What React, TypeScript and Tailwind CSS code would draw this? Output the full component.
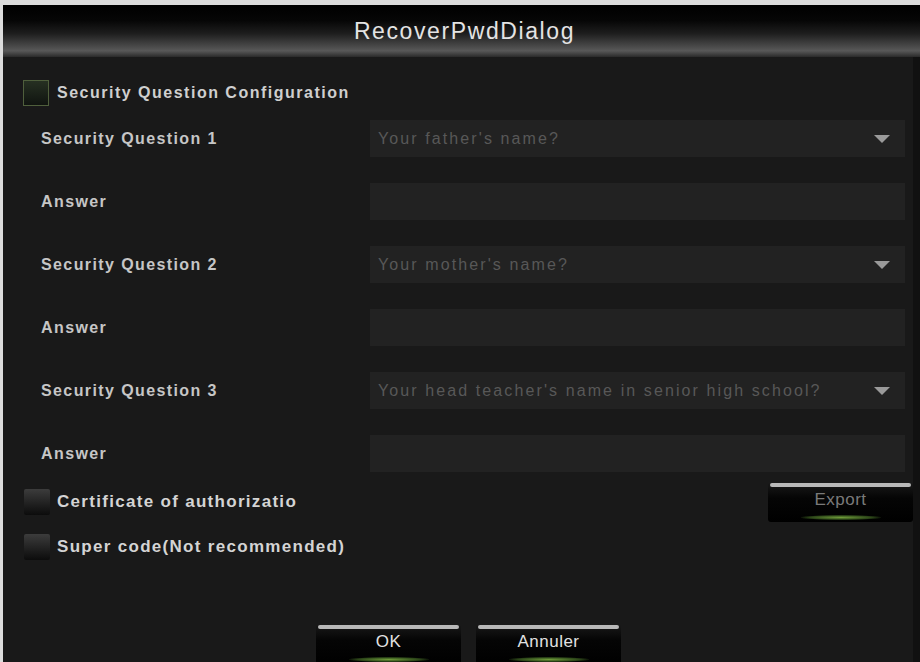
import type { ReactNode } from 'react'

const ROWS = [
  { label: 'Security Question 1', kind: 'select', value: "Your father's name?" },
  { label: 'Answer', kind: 'input' },
  { label: 'Security Question 2', kind: 'select', value: "Your mother's name?" },
  { label: 'Answer', kind: 'input' },
  { label: 'Security Question 3', kind: 'select', value: "Your head teacher's name in senior high school?" },
  { label: 'Answer', kind: 'input' },
] as const

function CheckBox({ active }: { active?: boolean }) {
  return active ? (
    <span className="block h-[26px] w-[26px] shrink-0 border border-[#4f5f3c] bg-[linear-gradient(to_bottom,#263022,#101410)]" />
  ) : (
    <span className="block h-[26px] w-[26px] shrink-0 rounded-[2px] bg-[linear-gradient(to_bottom,#3c3c3c,#1a1a1a_70%,#0c0c0c)]" />
  )
}

function DvrButton({ children, dim }: { children: ReactNode; dim?: boolean }) {
  return (
    <button
      className={
        'relative flex h-[40px] w-[145px] flex-col overflow-hidden rounded-[3px] bg-[linear-gradient(to_bottom,#1a1a1a,#050505_40%,#000)] ' +
        (dim ? 'text-[#7a7a7a]' : 'text-[#e2e2e2]')
      }
    >
      <span className="mx-[2px] mt-[1px] block h-[4px] rounded-full bg-[#b8b8b8]" />
      <span className="flex h-[25px] items-center justify-center text-[17px] tracking-[0.5px]">{children}</span>
      <span className="absolute bottom-[2px] left-1/2 h-[5px] w-[80px] -translate-x-1/2 rounded-full bg-[radial-gradient(ellipse_at_center,#6f9c3a_0%,#2b4418_55%,transparent_75%)]" />
    </button>
  )
}

export default function App() {
  return (
    <div className="h-[662px] w-[920px] overflow-hidden bg-[#dcdcdc] pl-[3px] pt-[5px] font-['Liberation_Sans',Arial,sans-serif]">
      <div className="flex h-full flex-col bg-[#191919]">
        {/* Title bar */}
        <div className="flex h-[52px] shrink-0 items-center justify-center bg-[linear-gradient(to_bottom,#000_0%,#060606_30%,#1e1e1e_55%,#4a4a4a_80%,#585858_88%,#2a2a2a_100%)]">
          <span className="pl-[6px] text-[23px] tracking-[1.6px] text-[#e4e4e4]">RecoverPwdDialog</span>
        </div>

        <div className="flex flex-1 flex-col border-r-[7px] border-[#111]">
          {/* Security question toggle */}
          <label className="ml-[20px] mt-[23px] flex h-[26px] items-center gap-[8px]">
            <CheckBox active />
            <span className="text-[16px] font-bold tracking-[1.5px] text-[#cfcfcf]">Security Question Configuration</span>
          </label>

          {/* Questions */}
          <div className="mt-[14px] grid grid-cols-[329px_535px] gap-y-[26px] pl-[38px]">
            {ROWS.map((row, i) => (
              <div key={i} className="contents">
                <span className="flex h-[37px] items-center text-[16px] font-bold tracking-[1.4px] text-[#c6c6c6]">
                  {row.label}
                </span>
                {row.kind === 'select' ? (
                  <div className="flex h-[37px] items-center justify-between bg-[#222] pl-[8px] pr-[14px]">
                    <span className="text-[16px] tracking-[2.1px] text-[#585858]">{row.value}</span>
                    <svg width="18" height="10" viewBox="0 0 18 10" aria-hidden="true">
                      <path d="M1 1h16L9 9z" fill="#9a9a9a" />
                    </svg>
                  </div>
                ) : (
                  <div className="h-[37px] bg-[#222]" />
                )}
              </div>
            ))}
          </div>

          {/* Recovery options */}
          <div className="mt-[12px] flex h-[36px] items-center justify-between pl-[21px]">
            <label className="flex items-center gap-[7px]">
              <CheckBox />
              <span className="text-[17px] font-bold tracking-[1.3px] text-[#d4d4d4]">Certificate of authorizatio</span>
            </label>
            <DvrButton dim>Export</DvrButton>
          </div>
          <label className="ml-[21px] mt-[14px] flex h-[26px] items-center gap-[7px]">
            <CheckBox />
            <span className="text-[17px] font-bold tracking-[1.3px] text-[#d4d4d4]">Super code(Not recommended)</span>
          </label>

          {/* Footer buttons */}
          <div className="mt-[64px] flex justify-center gap-[15px] pl-[21px]">
            <DvrButton>OK</DvrButton>
            <DvrButton>Annuler</DvrButton>
          </div>
        </div>
      </div>
    </div>
  )
}
